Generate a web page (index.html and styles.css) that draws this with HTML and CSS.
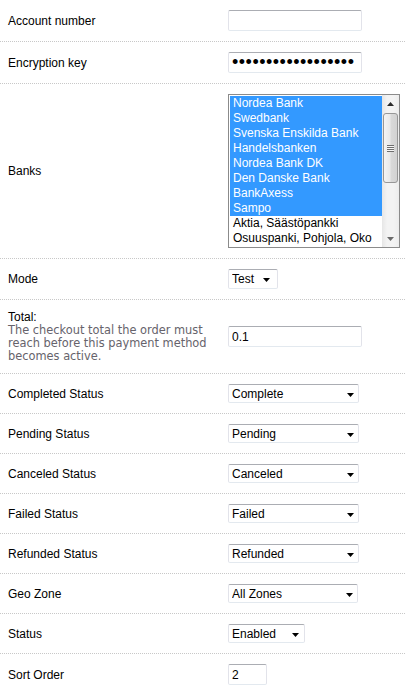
FILE: index.html
```html
<!DOCTYPE html>
<html lang="en">
<head>
<meta charset="utf-8">
<title>Payment method settings</title>
<link rel="stylesheet" href="styles.css">
</head>
<body>
<form class="form">
  <div class="row">
    <label class="label" for="account">Account number</label>
    <div class="field"><input id="account" class="input" type="text"></div>
  </div>
  <div class="row">
    <label class="label" for="key">Encryption key</label>
    <div class="field"><input id="key" class="input input-secret" type="password" value="abcdefghijklmnopqr"></div>
  </div>
  <div class="row">
    <span class="label">Banks</span>
    <div class="field">
      <div class="listbox" role="listbox" aria-multiselectable="true" aria-label="Banks">
        <ul class="options">
          <li class="option is-selected" role="option" aria-selected="true">Nordea Bank</li>
          <li class="option is-selected" role="option" aria-selected="true">Swedbank</li>
          <li class="option is-selected" role="option" aria-selected="true">Svenska Enskilda Bank</li>
          <li class="option is-selected" role="option" aria-selected="true">Handelsbanken</li>
          <li class="option is-selected" role="option" aria-selected="true">Nordea Bank DK</li>
          <li class="option is-selected" role="option" aria-selected="true">Den Danske Bank</li>
          <li class="option is-selected" role="option" aria-selected="true">BankAxess</li>
          <li class="option is-selected" role="option" aria-selected="true">Sampo</li>
          <li class="option" role="option" aria-selected="false">Aktia, Säästöpankki</li>
          <li class="option" role="option" aria-selected="false">Osuuspanki, Pohjola, Oko</li>
        </ul>
        <div class="scrollbar" aria-hidden="true">
          <div class="sb-btn"><svg width="7" height="4" viewBox="0 0 7 4"><path d="M0 4 L3.5 0 L7 4 Z" fill="#2b2b2b"/></svg></div>
          <div class="sb-track"><div class="sb-thumb"><span class="sb-grip"></span></div></div>
          <div class="sb-btn"><svg width="7" height="4" viewBox="0 0 7 4"><path d="M0 0 L7 0 L3.5 4 Z" fill="#6a6a6a"/></svg></div>
        </div>
      </div>
    </div>
  </div>
  <div class="row">
    <label class="label" for="mode">Mode</label>
    <div class="field">
      <span class="select-wrap">
        <select id="mode" class="select select-mode"><option>Test</option><option>Live</option></select>
        <svg class="caret" width="7" height="4" viewBox="0 0 7 4"><path d="M0 0 L7 0 L3.5 4 Z" fill="#000"/></svg>
      </span>
    </div>
  </div>
  <div class="row">
    <label class="label" for="total">Total:<span class="help">The checkout total the order must reach before this payment method becomes active.</span></label>
    <div class="field"><input id="total" class="input" type="text" value="0.1"></div>
  </div>
  <div class="row">
    <label class="label" for="completed">Completed Status</label>
    <div class="field">
      <span class="select-wrap">
        <select id="completed" class="select select-wide"><option>Complete</option></select>
        <svg class="caret" width="7" height="4" viewBox="0 0 7 4"><path d="M0 0 L7 0 L3.5 4 Z" fill="#000"/></svg>
      </span>
    </div>
  </div>
  <div class="row">
    <label class="label" for="pending">Pending Status</label>
    <div class="field">
      <span class="select-wrap">
        <select id="pending" class="select select-wide"><option>Pending</option></select>
        <svg class="caret" width="7" height="4" viewBox="0 0 7 4"><path d="M0 0 L7 0 L3.5 4 Z" fill="#000"/></svg>
      </span>
    </div>
  </div>
  <div class="row">
    <label class="label" for="canceled">Canceled Status</label>
    <div class="field">
      <span class="select-wrap">
        <select id="canceled" class="select select-wide"><option>Canceled</option></select>
        <svg class="caret" width="7" height="4" viewBox="0 0 7 4"><path d="M0 0 L7 0 L3.5 4 Z" fill="#000"/></svg>
      </span>
    </div>
  </div>
  <div class="row">
    <label class="label" for="failed">Failed Status</label>
    <div class="field">
      <span class="select-wrap">
        <select id="failed" class="select select-wide"><option>Failed</option></select>
        <svg class="caret" width="7" height="4" viewBox="0 0 7 4"><path d="M0 0 L7 0 L3.5 4 Z" fill="#000"/></svg>
      </span>
    </div>
  </div>
  <div class="row">
    <label class="label" for="refunded">Refunded Status</label>
    <div class="field">
      <span class="select-wrap">
        <select id="refunded" class="select select-wide"><option>Refunded</option></select>
        <svg class="caret" width="7" height="4" viewBox="0 0 7 4"><path d="M0 0 L7 0 L3.5 4 Z" fill="#000"/></svg>
      </span>
    </div>
  </div>
  <div class="row">
    <label class="label" for="geo">Geo Zone</label>
    <div class="field">
      <span class="select-wrap">
        <select id="geo" class="select select-geo"><option>All Zones</option></select>
        <svg class="caret" width="7" height="4" viewBox="0 0 7 4"><path d="M0 0 L7 0 L3.5 4 Z" fill="#000"/></svg>
      </span>
    </div>
  </div>
  <div class="row">
    <label class="label" for="status">Status</label>
    <div class="field">
      <span class="select-wrap">
        <select id="status" class="select select-status"><option>Enabled</option><option>Disabled</option></select>
        <svg class="caret" width="7" height="4" viewBox="0 0 7 4"><path d="M0 0 L7 0 L3.5 4 Z" fill="#000"/></svg>
      </span>
    </div>
  </div>
  <div class="row">
    <label class="label" for="sort">Sort Order</label>
    <div class="field"><input id="sort" class="input input-small" type="text" value="2"></div>
  </div>
</form>
</body>
</html>
```

FILE: styles.css
```css
html, body {
  margin: 0;
  padding: 0;
  background: #fff;
}

body {
  font-family: "Liberation Sans", Arial, sans-serif;
  font-size: 12px;
  color: #000;
}

.form {
  margin: 0;
}

.row {
  display: grid;
  grid-template-columns: 220px 1fr;
  align-items: center;
  padding: 10px 0 10px 8px;
  border-bottom: 1px dotted #c8c8c8;
}

.label {
  line-height: 14px;
}

.help {
  display: block;
  font-family: "DejaVu Sans", Verdana, sans-serif;
  font-size: 11.4px;
  line-height: 13px;
  color: #66636b;
}

.field {
  display: flex;
  align-items: center;
}

.input {
  box-sizing: border-box;
  display: block;
  width: 134px;
  height: 21px;
  margin: 0;
  padding: 0 3px;
  border: 1px solid;
  border-color: #abadb3 #e2e3ea #e3e9ef #e2e3ea;
  border-radius: 2px;
  background: #fff;
  font-family: "Liberation Sans", Arial, sans-serif;
  font-size: 12px;
  color: #000;
  outline: none;
}

.input-secret {
  font-size: 18px;
  letter-spacing: 0.5px;
  padding-left: 3px;
}

.input-small {
  width: 39px;
}

/* Multi-select list */
.listbox {
  box-sizing: border-box;
  display: flex;
  width: 172px;
  height: 154px;
  border: 1px solid #8b8b8b;
  background: #fff;
}

.options {
  flex: 1;
  list-style: none;
  margin: 1px 0 0 1px;
  padding: 0;
  overflow: hidden;
}

.option {
  height: 15px;
  line-height: 15px;
  padding-left: 3px;
  white-space: nowrap;
}

.option.is-selected {
  background: #3399ff;
  color: #fff;
}

.scrollbar {
  width: 17px;
  display: flex;
  flex-direction: column;
  background: linear-gradient(to right, #e6e6e6, #f3f3f3 30%, #f3f3f3 70%, #ececec);
}

.sb-btn {
  height: 17px;
  display: flex;
  align-items: center;
  justify-content: center;
}

.sb-track {
  flex: 1;
  padding: 1px 1px 0;
}

.sb-thumb {
  box-sizing: border-box;
  height: 70px;
  border: 1px solid #979797;
  border-radius: 3px;
  background: linear-gradient(to right, #f4f4f4, #e9e9e9 45%, #d9d9d9 55%, #d2d2d2);
  display: flex;
  align-items: center;
  justify-content: center;
}

.sb-grip {
  display: block;
  width: 7px;
  height: 7px;
  background: repeating-linear-gradient(to bottom, #6e6e6e 0 1px, #f6f6f6 1px 2px);
}

/* Dropdowns */
.select-wrap {
  position: relative;
  display: inline-block;
}

.select {
  -webkit-appearance: none;
  appearance: none;
  box-sizing: border-box;
  display: block;
  height: 19px;
  margin: 0;
  padding: 0 14px 0 3px;
  border: 1px solid;
  border-color: #abadb3 #e2e3ea #e3e9ef #e2e3ea;
  border-radius: 2px;
  background: #fff;
  font-family: "Liberation Sans", Arial, sans-serif;
  font-size: 12px;
  color: #000;
  outline: none;
}

.select-mode {
  width: 50px;
  height: 20px;
}

.select-status {
  width: 77px;
}

.select-wide {
  width: 131px;
}

.select-geo {
  width: 130px;
}

.caret {
  position: absolute;
  right: 5px;
  top: 50%;
  margin-top: -1px;
  pointer-events: none;
}

.select-mode + .caret {
  right: 8px;
}

.select-status + .caret {
  right: 6px;
}
```
